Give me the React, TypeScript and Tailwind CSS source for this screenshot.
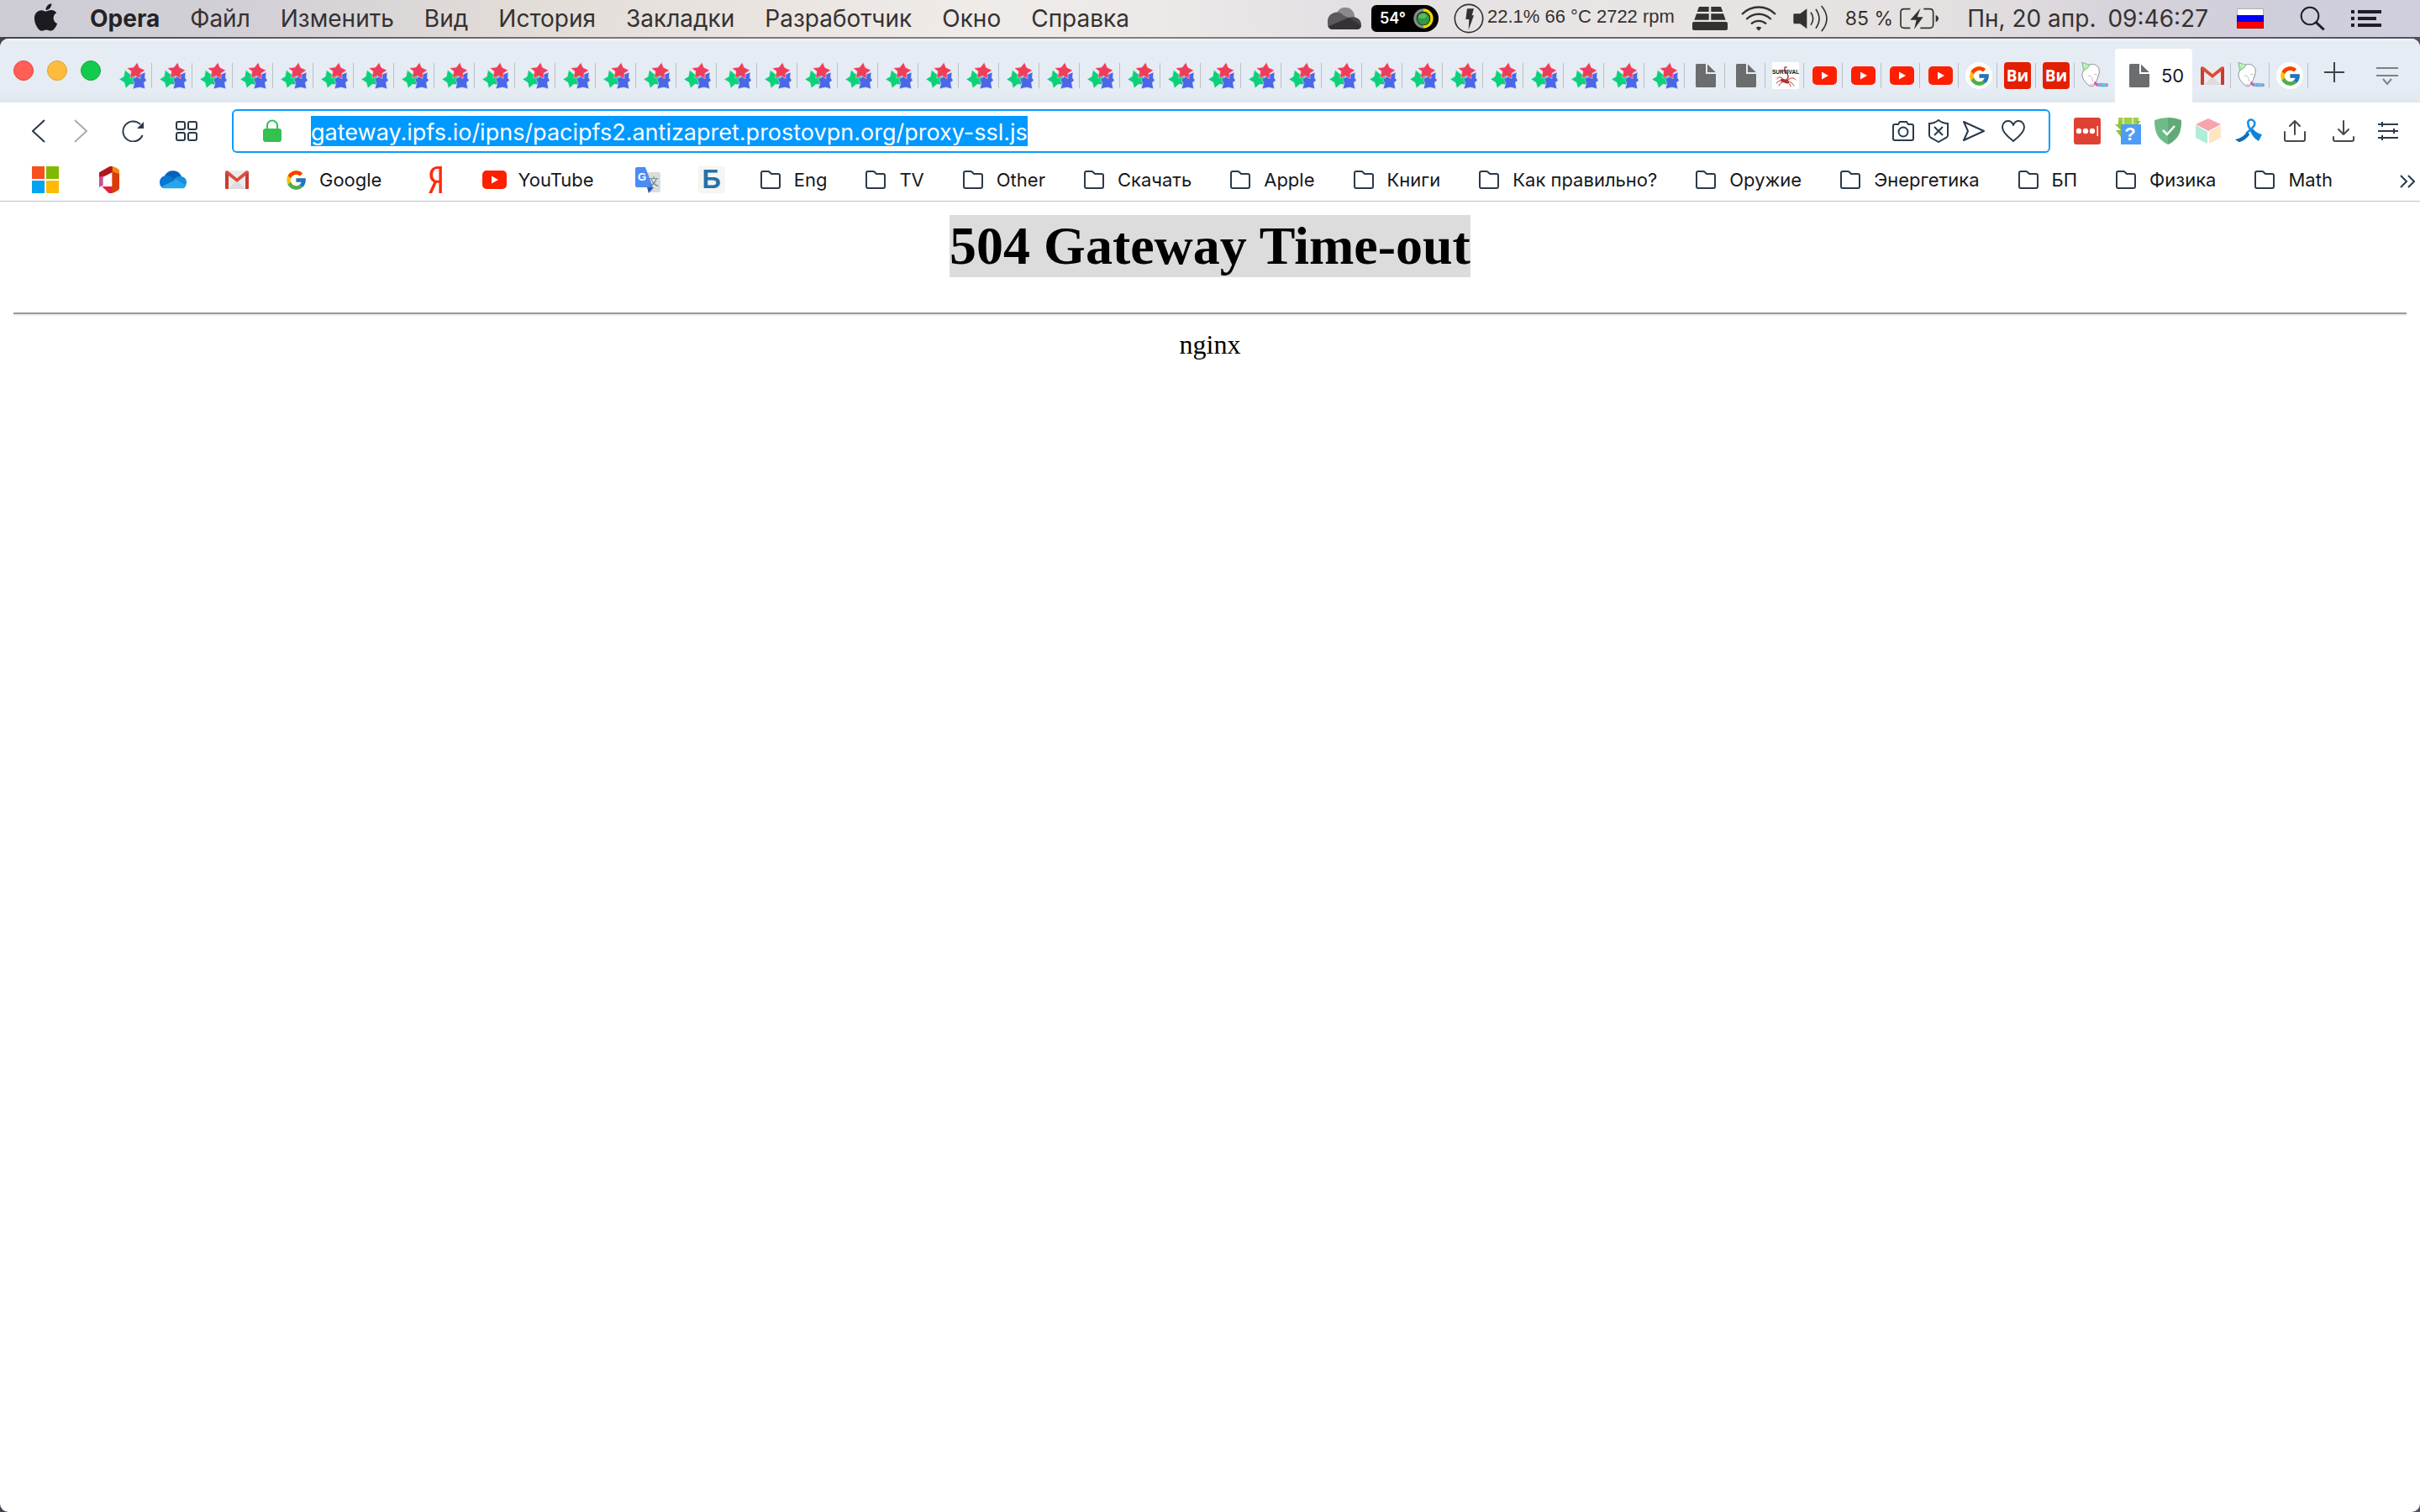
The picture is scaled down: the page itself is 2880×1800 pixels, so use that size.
import type { ReactNode } from "react";
import { FaApple, FaYandex } from "react-icons/fa";
import { FcGoogle } from "react-icons/fc";

const menuItems = ["Файл", "Изменить", "Вид", "История", "Закладки", "Разработчик", "Окно", "Справка"];

/* ---------- menu bar icons ---------- */

const CloudStatus = () => (
  <svg className="h-[26px] w-10" viewBox="30 24 120 78">
    <circle cx="93" cy="56" r="33" fill="#8b898c" />
    <path d="M48 102a18 18 0 0 1-18-18v-10a32 32 0 0 1 56-22l28 12-50 38z" fill="#5c5a5e" />
    <path d="M104 60c30-8 46 8 46 26a16 16 0 0 1-16 16H48a18 18 0 0 1-17-12z" fill="#48464a" />
    <path d="M33 92 108 60l42 30a16 16 0 0 1-16 12H48a18 18 0 0 1-15-10z" fill="#343236" />
  </svg>
);

const Gauge = () => (
  <svg className="size-6" viewBox="336 27 72 70">
    <path d="M372 27a35 35 0 0 0 0 70z" fill="#8a8a8a" />
    <path d="M372 27a35 35 0 0 1 0 70z" fill="#f2d500" />
    <circle cx="372" cy="62" r="25" fill="#0c2a10" />
    <circle cx="372" cy="63" r="22" fill="#2f9a3d" />
    <ellipse cx="369" cy="54" rx="14" ry="9" fill="#6cc476" opacity="0.7" />
  </svg>
);

const BoltCircle = () => (
  <svg className="size-9" viewBox="479 11 108 108">
    <circle cx="533" cy="65" r="50" fill="none" stroke="#353131" strokeWidth="5" />
    <path d="M527 30h24l-7 24h7l-19 52 2-38h-12z" fill="#353131" />
  </svg>
);

const Bricks = () => (
  <svg className="h-7 w-[42px]" viewBox="72 24 126 84" fill="#353131">
    <path d="M96 24h35v18H89zM139 24h35l7 18h-42zM87 49h44v22H79zM139 49h44l8 22h-52z" />
    <rect x="72" y="78" width="126" height="30" rx="6" />
  </svg>
);

const Wifi = () => (
  <svg className="h-[30px] w-[42px]" viewBox="246 19 126 90" fill="none" stroke="#353131" strokeWidth="7">
    <path d="M249 49c34-34 86-34 120 0M265 67c25-25 63-25 88 0M282 83c16-14 38-14 54 0" />
    <path d="M299 97q10-8 20 0l-10 11z" fill="#353131" stroke="none" />
  </svg>
);

const Sound = () => (
  <svg className="h-8 w-[42px]" viewBox="431 17 126 96" fill="none" stroke="#353131" strokeWidth="5">
    <path d="M436 48h20l24-18v72l-24-18h-20q-4 0-4-4V52q0-4 4-4z" fill="#353131" stroke="none" />
    <path d="M494 43q16 23 0 45M512 32q24 34 0 68M532 20q38 46 0 91" />
  </svg>
);

const Battery = () => (
  <svg className="h-[26px] w-[46px]" viewBox="815 27 138 78" fill="none" stroke="#353131" strokeWidth="5">
    <path d="M852 32h-22q-12 0-12 12v44q0 12 12 12h22M900 32h22q12 0 12 12v44q0 12-12 12h-34" />
    <path d="M889 29l-37 42h22l-8 33 32-43h-21z" fill="#353131" stroke="none" />
    <path d="M943 53q10 5 10 13t-10 13z" fill="#353131" stroke="none" />
  </svg>
);

const Flag = () => (
  <svg className="h-6 w-8" viewBox="0 0 32 24">
    <rect width="32" height="8" fill="#fff" />
    <rect y="8" width="32" height="8" fill="#0000fe" />
    <rect y="16" width="32" height="8" fill="#fe0000" />
    <rect x="0.5" y="0.5" width="31" height="23" fill="none" stroke="#000" strokeOpacity="0.3" />
  </svg>
);

const Search = () => (
  <svg className="size-[30px]" viewBox="922 22 90 90" fill="none" stroke="#1f1e28">
    <circle cx="958" cy="58" r="31" strokeWidth="6" />
    <path d="m980 81 28 26" strokeWidth="9" />
  </svg>
);

const ListIcon = () => (
  <svg className="h-5 w-9" viewBox="0 0 36 20" fill="#1f1e28">
    <path d="M0 0h4v4H0zM8 0h28v4H8zM0 8h4v4H0zM8 8h22v4H8zM0 16h4v4H0zM8 16h28v4H8z" />
  </svg>
);

/* ---------- site icons ---------- */

const Stars = () => (
  <svg className="size-8" viewBox="427 42 96 96">
    <g stroke="#f3f1f6" strokeWidth="1.500" strokeLinejoin="round">
      <path d="M426 103l17-10 4-23 17 14 25-1-8 21 7 20-22-3-16 14-5-20z" fill="#0bd27a" />
      <path d="M482 76l17 10 21-8-2 20 6 8-9 9 4 22-20-5-24 5 6-20-7-14 12-7z" fill="#4a67e8" />
      <path d="M491 43l7 18 21 10-17 11 0 19-17-10-20 8 4-24-15-12 24-3z" fill="#ef3e5b" />
    </g>
  </svg>
);

const Doc = () => (
  <svg className="h-7 w-6" viewBox="0 0 24 28" fill="#6c6d6e">
    <path d="M0 1.5Q0 0 1.500 0H12v12h12v14.500q0 1.500-1.500 1.500h-21Q0 28 0 26.500z" />
    <path d="M14 0.500 23.700 10H14z" />
  </svg>
);

const Survival = () => (
  <svg className="size-8 bg-white" viewBox="0 0 32 32">
    <g fill="none" stroke="#b23438" strokeLinecap="round">
      <path d="M16 22c5-3 3-8 0-11-2-3-1-6 1-5" strokeWidth="1.500" />
      <path d="M12 19c-3-2-6-1-6 1M12 22c-4 0-6 1-7 3M18 22c4-4 8-4 10-1M19 23c4 1 6 3 7 5M17 23c3 2 4 3 5 6M12 24c-2 1-3 2-4 4" strokeWidth="1" />
      <path d="M12 21.500l6 2" strokeWidth="4" />
    </g>
    <text x="16" y="14" textAnchor="middle" fontFamily="Liberation Sans" fontWeight="700" fontSize="6.500" fill="#111">
      SURVIVAL
    </text>
  </svg>
);

const YouTube = ({ className = "" }: { className?: string }) => (
  <svg className={`h-[22px] w-[29px] ${className}`} viewBox="0 0 29 22">
    <rect width="29" height="22" rx="5" fill="#ff1f00" />
    <path d="m11 6.500 8 4.500-8 4.500z" fill="#fff" />
  </svg>
);

const GoogleRound = () => (
  <span className="flex size-8 items-center justify-center rounded-full bg-white">
    <FcGoogle className="size-[27px]" />
  </span>
);

const Vi = () => (
  <span className="flex size-8 items-center justify-center rounded-[4px] bg-[#e41e00] font-['Open_Sans',sans-serif] text-[19px] font-bold text-white">
    Ви
  </span>
);

const Head = () => (
  <svg className="size-8" viewBox="110 70 98 98">
    <path d="M138 80c14-6 32 0 36 14 2 10 1 20-3 28l-5 14c-2 12-8 18-16 22-8 1-16-4-22-12-8-10-14-16-15-28 0-12 8-28 25-38z" fill="#fff" stroke="#77777f" strokeWidth="2.500" />
    <path d="M134 122q6-6 12 0M156 116q6-5 12 1M148 124l4 16M140 150q10 6 18-2" fill="none" stroke="#9a9aa2" strokeWidth="2" />
    <path d="M112 71l28 9q-4 14-22 20z" fill="#a6e8ab" stroke="#6cab73" strokeWidth="2" />
    <path d="M119 76l6 14M129 78l2 8" stroke="#eafbe9" strokeWidth="3" />
    <path d="M158 138l14 14-4 7-12-9z" fill="#e24fb0" />
    <path d="M170 147l36 2v9q-20 2-36-1z" fill="#5fc9e8" stroke="#4a8ab8" strokeWidth="1.500" />
    <path d="M180 148l4 9M200 149l5 8" stroke="#e86ac0" strokeWidth="4" />
  </svg>
);

const Gmail = () => (
  <svg className="h-[22px] w-7" viewBox="804 70 84 66">
    <rect x="804" y="70" width="84" height="66" rx="4" fill="#ebebeb" />
    <path d="M816 136l30-30 30 30z" fill="#dcdcdc" />
    <path d="M804 74v58q0 4 4 4h8V88l30 24 30-24v48h8q4 0 4-4V74q-5-6-11-2l-31 26-31-26q-6-4-11 2z" fill="#dd4b3e" />
    <path d="M804 76v56q0 4 4 4h8V88zM888 76v56q0 4-4 4h-8V88z" fill="#c93c30" />
  </svg>
);

const Microsoft = () => (
  <span className="grid size-8 grid-cols-2 gap-[2px]">
    <span className="bg-[#f65021]" />
    <span className="bg-[#80b901]" />
    <span className="bg-[#02a4f1]" />
    <span className="bg-[#ffb905]" />
  </span>
);

const Office = () => (
  <svg className="h-8 w-6" viewBox="354 54 72 96">
    <path d="M354 76l34-20q8-4 14-1v20l-36 18v26l-12 8z" fill="#b3161b" />
    <path d="M354 92l14-4v34l-14 6z" fill="#c8508f" />
    <path d="M364 126h38v24q-6 2-14-1z" fill="#e3203c" />
    <path d="M400 55q26 8 26 16v62q0 8-26 17z" fill="#da3c04" />
    <path d="M402 55q24 8 24 16v10l-24-8z" fill="#ef8b10" />
  </svg>
);

const OneDrive = () => (
  <svg className="h-[22px] w-8" viewBox="570 68 96 66">
    <path d="M588 86q12-20 34-17 18 2 26 20l-26 12z" fill="#0463b8" />
    <path d="M584 132a24 24 0 0 1-14-22q1-24 27-25 12 1 22 10l8 8-40 28z" fill="#0877d4" />
    <path d="M622 98q12-12 26-9 18 4 18 22 0 6-4 12z" fill="#1490df" />
    <path d="M576 126l52-25 37 20q-4 11-17 11h-56q-11 0-16-6z" fill="#29a6ea" />
  </svg>
);

const Translate = () => (
  <svg className="h-[31px] w-8" viewBox="0 0 32 31">
    <path d="M12 6h17q2 0 2 2v20q0 2-2 2H18z" fill="#dcdcdc" />
    <path d="M15 24h8l-6 7z" fill="#3554b5" />
    <path d="M3 0h10l9 24H3q-2 0-2-2V2q0-2 2-2z" fill="#4c8bf5" />
    <text x="4" y="16" fontFamily="Liberation Sans" fontWeight="700" fontSize="13" fill="#fff">G</text>
    <text x="17" y="22" fontFamily="Noto Sans CJK SC" fontSize="12" fill="#5f7f86">文</text>
  </svg>
);

const Be = () => (
  <span className="flex size-8 items-center justify-center bg-[#f7f5f2] font-['Liberation_Sans',sans-serif] text-[31px] leading-8 font-bold text-[#2471a8]">
    Б
  </span>
);

const Folder = () => (
  <svg className="h-[22px] w-6" viewBox="0 0 24 22" fill="none" stroke="#2b3a4b" strokeWidth="2">
    <path d="M1 3q0-2 2-2h6q1 0 2 1l2 2h8q2 0 2 2v13q0 2-2 2H3q-2 0-2-2z" />
  </svg>
);

/* ---------- toolbar icons ---------- */

const line = { fill: "none", stroke: "#2b3a4b", strokeWidth: 2 } as const;

const Back = () => (
  <svg className="h-7 w-4" viewBox="0 0 16 28" {...line}><path d="M15 1 1 14l14 13" /></svg>
);
const Forward = () => (
  <svg className="h-7 w-4" viewBox="0 0 16 28" fill="none" stroke="#a9adb1" strokeWidth="2"><path d="m1 1 14 13L1 27" /></svg>
);
const Reload = () => (
  <svg className="size-[26px]" viewBox="0 0 26 26" {...line}>
    <path d="M24.500 18A12 12 0 1 1 22 5" />
    <path d="M26 2v8h-8z" fill="#2b3a4b" stroke="none" />
  </svg>
);
const Speed = () => (
  <svg className="h-6 w-[26px]" viewBox="0 0 26 24" {...line}>
    <rect x="1" y="1" width="10" height="9" rx="2" />
    <rect x="15" y="1" width="10" height="9" rx="2" />
    <rect x="1" y="14" width="10" height="9" rx="2" />
    <rect x="15" y="14" width="10" height="9" rx="2" />
  </svg>
);
const Lock = () => (
  <svg className="h-7 w-[22px]" viewBox="0 0 22 28">
    <path d="M5 13V7.500a6 6 0 0 1 12 0V13" fill="none" stroke="#34c14f" strokeWidth="2" />
    <rect y="11" width="22" height="16" rx="3" fill="#34c14f" />
  </svg>
);
const Camera = () => (
  <svg className="h-6 w-[26px]" viewBox="0 0 26 24" {...line}>
    <path d="M1 6q0-2 2-2h4l2-3h8l2 3h4q2 0 2 2v15q0 2-2 2H3q-2 0-2-2z" />
    <circle cx="13" cy="13" r="5.500" />
  </svg>
);
const ShieldX = () => (
  <svg className="h-7 w-6" viewBox="0 0 24 28" {...line}>
    <path d="M12 1q5 4 11 4v14q0 2-2 3l-9 5-9-5q-2-1-2-3V5q6 0 11-4z" />
    <path d="m7 9 10 10M17 9 7 19" />
  </svg>
);
const Send = () => (
  <svg className="h-6 w-[26px]" viewBox="0 0 26 24" {...line}><path d="m1 1 24 11L1 23l5-11z" strokeLinejoin="round" /></svg>
);
const Heart = () => (
  <svg className="h-[26px] w-7" viewBox="0 0 28 26" {...line}>
    <path d="M14 25C9 21 1 15 1 8.500 1 4 4 1 7.500 1 11 1 13 3 14 6c1-3 3-5 6.500-5C24 1 27 4 27 8.500 27 15 19 21 14 25z" strokeLinejoin="round" />
  </svg>
);

const PasswordDots = () => (
  <svg className="size-8" viewBox="0 0 32 32">
    <rect width="32" height="32" rx="3" fill="#df4135" />
    <g fill="#fff">
      <circle cx="6" cy="16" r="3.200" />
      <circle cx="14" cy="16" r="3.200" />
      <circle cx="22" cy="16" r="3.200" />
      <rect x="27.500" y="10" width="1.500" height="12" />
    </g>
  </svg>
);
const HelpRobot = () => (
  <svg className="size-8" viewBox="0 0 32 32">
    <path d="M5 0h24v12H5z" fill="#a4cf4c" />
    <path d="M5 4v4H1l7 7V4zM2 15h6v8z" fill="#8fc23a" />
    <path d="M26 4h6l-5 5z" fill="#8fc23a" />
    <path d="M11 0v8M22 0v8" stroke="#d3ec94" strokeWidth="2" />
    <rect x="8" y="8" width="24" height="24" fill="#4e9cf5" />
    <text x="19" y="27" textAnchor="middle" fontFamily="Liberation Sans" fontWeight="700" fontSize="22" fill="#fff">?</text>
  </svg>
);
const ShieldCheck = () => (
  <svg className="size-8" viewBox="0 0 32 32">
    <path d="M16 0q8 0 16 3c0 15-4 23-16 29C4 26 0 18 0 3q8-3 16-3z" fill="#6fbb87" />
    <path d="M16 0q8 0 16 3c0 15-4 23-16 29z" fill="#63a978" />
    <path d="m10 15 5 5 9-10" fill="none" stroke="#fff" strokeWidth="2.500" />
  </svg>
);
const Cube = () => (
  <svg className="size-8" viewBox="0 0 32 32">
    <path d="M16 1l15 7-15 8L1 8z" fill="#f9a3ad" />
    <path d="M1 9l14 8v14L1 24z" fill="#b0ecd9" />
    <path d="M31 9l-14 8v14l14-7z" fill="#ffe6c0" />
  </svg>
);
const Ribbon = () => (
  <svg className="size-8" viewBox="660 270 96 96" fill="none">
    <path d="M700 326c18-14 30-24 30-34 0-18-26-20-24-2 0 10 8 26 20 36" stroke="#1f8fe2" strokeWidth="8" />
    <path d="M660 348c16-2 30-10 42-26l10 8c-10 14-24 24-38 28z" fill="#0a6cc0" />
    <path d="M714 318l10-8c8 12 20 18 32 20l-12 24c-14-8-24-20-30-36z" fill="#0d84da" />
  </svg>
);
const gray = { fill: "none", stroke: "#454a4a", strokeWidth: 2, strokeLinecap: "round", strokeLinejoin: "round" } as const;
const Share = () => (
  <svg className="size-[26px]" viewBox="0 0 26 26" {...gray}>
    <path d="M1 14v9q0 2 2 2h20q2 0 2-2v-9M13 17V1M7 7l6-6 6 6" />
  </svg>
);
const Download = () => (
  <svg className="size-[26px]" viewBox="0 0 26 26" {...gray}>
    <path d="M1 20v3q0 2 2 2h20q2 0 2-2v-3M13 1v16M7 11l6 6 6-6" />
  </svg>
);
const Sliders = () => (
  <svg className="h-[22px] w-6" viewBox="0 0 24 22" {...line}>
    <path d="M0 3h24M0 11h24M0 19h24M5 0v6M19 8v6M5 16v6" />
  </svg>
);

/* ---------- data ---------- */

type Tab = { title: string; icon: ReactNode; wide?: boolean; active?: boolean };

const tabs: Tab[] = [
  ...Array.from({ length: 39 }, (_, i) => ({ title: `Stars ${i + 1}`, icon: <Stars />, wide: true })),
  { title: "Document 1", icon: <Doc />, wide: true },
  { title: "Document 2", icon: <Doc />, wide: true },
  { title: "Survival", icon: <Survival /> },
  ...Array.from({ length: 4 }, (_, i) => ({ title: `YouTube ${i + 1}`, icon: <YouTube /> })),
  { title: "Google", icon: <GoogleRound /> },
  { title: "Ви 1", icon: <Vi /> },
  { title: "Ви 2", icon: <Vi /> },
  { title: "Party", icon: <Head /> },
  { title: "504 Gateway Time-out", icon: <Doc />, active: true },
  { title: "Gmail", icon: <Gmail /> },
  { title: "Party", icon: <Head /> },
  { title: "Google", icon: <GoogleRound /> },
];

type Bookmark = { name: string; icon: ReactNode; label?: boolean };
const folder = (name: string): Bookmark => ({ name, icon: <Folder />, label: true });

const bookmarks: Bookmark[] = [
  { name: "Microsoft", icon: <Microsoft /> },
  { name: "Office", icon: <Office /> },
  { name: "OneDrive", icon: <OneDrive /> },
  { name: "Gmail", icon: <Gmail /> },
  { name: "Google", icon: <FcGoogle className="size-[27px] shrink-0" />, label: true },
  { name: "Яндекс", icon: <FaYandex className="size-8 text-[#ff2a10]" /> },
  { name: "YouTube", icon: <YouTube className="shrink-0" />, label: true },
  { name: "Translate", icon: <Translate /> },
  { name: "Библиотека", icon: <Be /> },
  folder("Eng"),
  folder("TV"),
  folder("Other"),
  folder("Скачать"),
  folder("Apple"),
  folder("Книги"),
  folder("Как правильно?"),
  folder("Оружие"),
  folder("Энергетика"),
  folder("БП"),
  folder("Физика"),
  folder("Math"),
];

/* ---------- parts ---------- */

function MenuBar() {
  return (
    <header className="flex h-11 items-center bg-[linear-gradient(90deg,#cdccd5_0%,#d2d0d6_10%,#e3ddd8_22%,#efebe8_40%,#ece9e8_48%,#e3e0e4_56%,#e9e5e4_66%,#e5e1e1_80%,#d6d2da_88%,#cfcedb_94%,#d0cfdd_100%)] pr-[46px] pl-9 text-[28px] leading-[34px] text-[#353131]">
      <button type="button" aria-label="Apple" className="text-[#1d1b20]">
        <FaApple className="-mt-1 size-[37px]" />
      </button>
      <nav className="ml-[34px] flex gap-9">
        <button type="button" className="font-bold text-[#242226]">Opera</button>
        {menuItems.map((m) => (
          <button type="button" key={m}>{m}</button>
        ))}
      </nav>
      <div className="ml-auto flex items-center">
        <CloudStatus />
        <div className="ml-3 flex h-8 w-20 items-center justify-between rounded-l-[6px] rounded-r-[16px] bg-black pr-[6px] pl-[10px] text-[18px] font-semibold text-white">
          54° <Gauge />
        </div>
        <div className="ml-[18px] flex items-center gap-1 font-['Liberation_Sans',sans-serif] text-[22px] leading-6">
          <BoltCircle />
          <span className="-mt-1">22.1% 66 °C 2722 rpm</span>
        </div>
        <div className="ml-[21px] flex items-center gap-4">
          <Bricks />
          <Wifi />
        </div>
        <div className="ml-5 flex items-center gap-5">
          <Sound />
          <span className="flex items-center gap-2 text-[23px]">85 % <Battery /></span>
        </div>
        <time className="ml-[34px] flex gap-[14px]">
          <span>Пн, 20 апр.</span>
          <span>09:46:27</span>
        </time>
        <button type="button" aria-label="Раскладка" className="ml-[34px]"><Flag /></button>
        <button type="button" aria-label="Поиск" className="ml-[43px]"><Search /></button>
        <button type="button" aria-label="Уведомления" className="ml-[31px]"><ListIcon /></button>
      </div>
    </header>
  );
}

function TabStrip() {
  return (
    <div className="flex h-[76px] items-center bg-[linear-gradient(180deg,#f1f6fb_0%,#e5ecf4_5%,#e5ecf4_84%,#dfe7ef_100%)] pl-4">
      <div className="flex gap-4">
        <button type="button" aria-label="Закрыть" className="size-6 rounded-full border border-[#e2463f] bg-[#ff5f57]" />
        <button type="button" aria-label="Свернуть" className="size-6 rounded-full border border-[#e0a032] bg-[#febc3f]" />
        <button type="button" aria-label="Развернуть" className="size-6 rounded-full border border-[#14a83c] bg-[#12ca4c]" />
      </div>
      <div role="tablist" className="ml-[14px] flex h-full shrink-0 items-end">
        {tabs.map((t, i) =>
          t.active ? (
            <button
              type="button"
              role="tab"
              aria-selected="true"
              key={i}
              className="mx-px flex h-16 w-[92px] items-center gap-[14px] rounded-t-[4px] bg-white pl-[17px] text-[22px] text-[#15181c]"
            >
              <span className="shrink-0">{t.icon}</span>
              <span>50</span>
            </button>
          ) : (
            <button
              type="button"
              role="tab"
              aria-selected="false"
              aria-label={t.title}
              key={i}
              className={`flex h-16 items-center justify-between pr-px ${t.wide ? "w-12 pl-2" : "w-[46px] pl-[7px]"}`}
            >
              <span className="flex w-8 justify-center">{t.icon}</span>
              <span className={tabs[i + 1]?.active ? "" : "h-[30px] w-px bg-[#b9c0c8]"} />
            </button>
          ),
        )}
      </div>
      <button type="button" aria-label="Новая вкладка" className="mt-1 ml-[18px]">
        <svg className="size-6" viewBox="0 0 24 24" stroke="#3f4346" strokeWidth="2"><path d="M12 0v24M0 12h24" /></svg>
      </button>
      <button type="button" aria-label="Меню вкладок" className="mt-3 mr-[26px] ml-auto">
        <svg className="h-6 w-[26px]" viewBox="0 0 26 24" fill="none" stroke="#7d8186" strokeWidth="2">
          <path d="M0 3h26M0 12h26M8 16l5 6 5-6" />
        </svg>
      </button>
    </div>
  );
}

function Toolbar() {
  return (
    <div className="flex items-center bg-white pt-2 pr-[26px] pl-[38px]">
      <button type="button" aria-label="Назад"><Back /></button>
      <button type="button" aria-label="Вперёд" className="ml-[34px]"><Forward /></button>
      <button type="button" aria-label="Обновить" className="ml-[41px]"><Reload /></button>
      <button type="button" aria-label="Экспресс-панель" className="ml-[38px]"><Speed /></button>
      <div className="ml-[41px] flex h-[52px] flex-1 items-center rounded-[6px] border-2 border-[#0a9bff] pr-7 pl-[35px]">
        <Lock />
        <input
          aria-label="Адрес"
          defaultValue="gateway.ipfs.io/ipns/pacipfs2.antizapret.prostovpn.org/proxy-ssl.js"
          className="ml-[35px] field-sizing-content h-9 bg-[#0099ff] pt-[2px] text-[27px] leading-[34px] text-white outline-none"
        />
        <div className="ml-auto flex items-center gap-[17px]">
          <button type="button" aria-label="Снимок"><Camera /></button>
          <button type="button" aria-label="Блокировка"><ShieldX /></button>
          <button type="button" aria-label="Отправить"><Send /></button>
          <button type="button" aria-label="В закладки" className="ml-[3px]"><Heart /></button>
        </div>
      </div>
      <div className="ml-7 flex gap-4">
        <button type="button" aria-label="Пароли"><PasswordDots /></button>
        <button type="button" aria-label="Помощь"><HelpRobot /></button>
        <button type="button" aria-label="Защита"><ShieldCheck /></button>
        <button type="button" aria-label="Куб"><Cube /></button>
        <button type="button" aria-label="Лента"><Ribbon /></button>
      </div>
      <button type="button" aria-label="Поделиться" className="ml-[26px]"><Share /></button>
      <button type="button" aria-label="Загрузки" className="ml-8"><Download /></button>
      <button type="button" aria-label="Настройка" className="ml-7"><Sliders /></button>
    </div>
  );
}

function BookmarksBar() {
  return (
    <nav className="flex items-center border-b border-[#b8c2cb] bg-white pt-4 pr-[6px] pb-[9px] pl-4 text-[22px] leading-8 text-[#15181c]">
      {bookmarks.map((b) =>
        b.label ? (
          <a key={b.name} href="#" className="flex items-center gap-4 pr-[26px] pl-5">
            <span className="flex w-6 justify-center">{b.icon}</span>
            {b.name}
          </a>
        ) : (
          <a key={b.name} href="#" aria-label={b.name} className="px-[22px]">
            <span className="flex size-8 items-center justify-center">{b.icon}</span>
          </a>
        ),
      )}
      <button type="button" aria-label="Ещё" className="ml-auto pt-1">
        <svg className="h-4 w-[18px]" viewBox="0 0 18 16" {...line}><path d="m1 1 7 7-7 7M10 1l7 7-7 7" /></svg>
      </button>
    </nav>
  );
}

export default function App() {
  return (
    <div className="flex min-h-screen flex-col bg-[linear-gradient(90deg,#45434e_0%,#7d736c_25%,#8b8078_45%,#6d666c_65%,#6a5f66_85%,#54505e_100%)] font-['Inter',sans-serif]">
      <MenuBar />
      <div className="mt-[2px] flex flex-1 flex-col overflow-hidden rounded-[10px] bg-white">
        <TabStrip />
        <Toolbar />
        <BookmarksBar />
        <main className="m-4 text-center font-['Liberation_Serif',serif] text-[32px] leading-[37px] text-black">
          <h1 className="text-[64px] leading-[74px] font-bold">
            <mark className="inline-block bg-[#dcdcdc] text-black">504 Gateway Time-out</mark>
          </h1>
          <hr className="mt-[42px] mb-4 border-t-2 border-b-2 border-t-[#9a9a9a] border-b-[#eeeeee]" />
          <p>nginx</p>
        </main>
      </div>
    </div>
  );
}
